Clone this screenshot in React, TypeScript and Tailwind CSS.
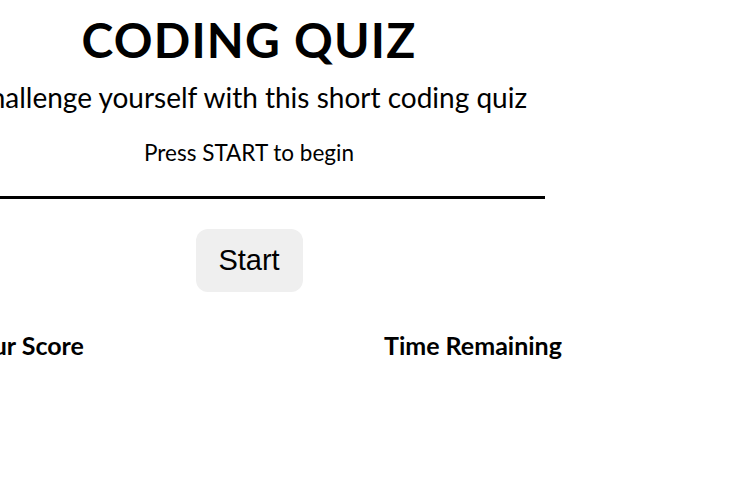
import React from 'react';

const font = { fontFamily: '"Gill Sans", "Gill Sans MT", Lato, "Noto Sans", sans-serif' };

export default function App() {
  return (
    <div className="w-[741px] h-[488px] bg-white overflow-hidden text-black" style={font}>
      <div className="w-[592px] ml-[-47px] flex flex-col items-center">
        <h1 className="mt-[14px] text-[48px] leading-[52px] font-bold tracking-[1.2px]">CODING QUIZ</h1>
        <p className="mt-[15px] text-[28px] leading-[32px] whitespace-nowrap">Challenge yourself with this short coding quiz</p>
        <p className="mt-[26px] text-[22.5px] leading-[28px]">Press START to begin</p>
        <div className="mt-[29px] w-full h-[3px] bg-black" />
        <button
          className="mt-[30px] w-[107px] h-[63px] rounded-[12px] bg-[#efefef] text-[29px]"
          style={{ fontFamily: '"Liberation Sans", Arial, sans-serif' }}
        >
          Start
        </button>
      </div>
      <div className="mt-[38px] flex text-[25px] font-bold leading-[30px]">
        <div className="w-[419px] ml-[-35px]">Your Score</div>
        <div>Time Remaining</div>
      </div>
    </div>
  );
}
